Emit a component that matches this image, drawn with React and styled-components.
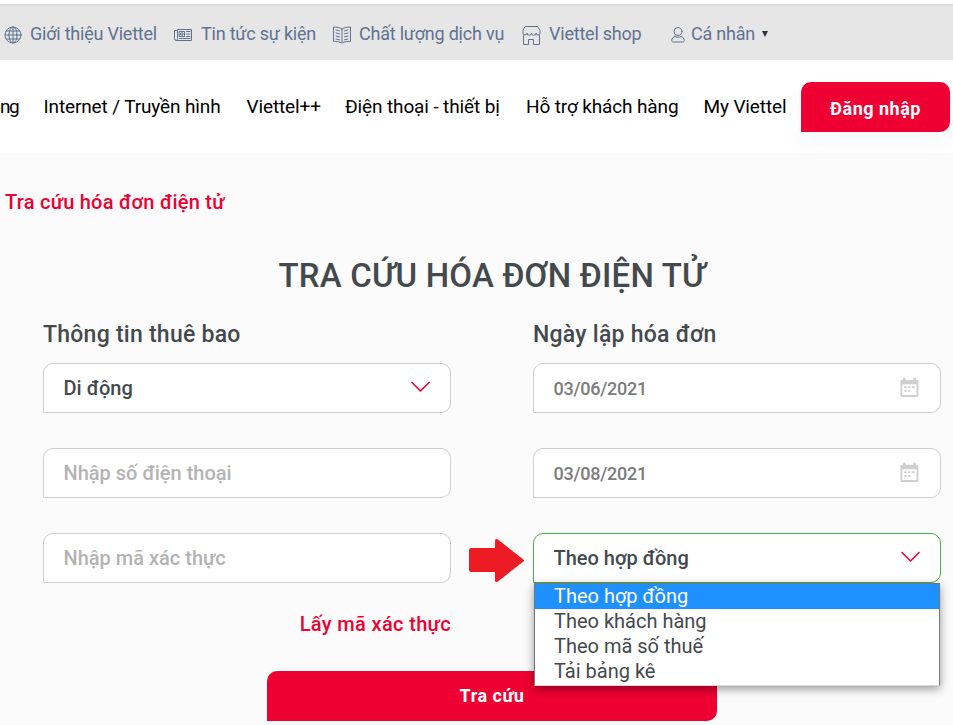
import React from "react";
import styled, { createGlobalStyle } from "styled-components";

const GlobalStyle = createGlobalStyle`
  * {
    box-sizing: border-box;
  }

  body {
    margin: 0;
    background-color: #fbfbfb;
    font-family: Roboto, "Liberation Sans", sans-serif;
    overflow: hidden;
  }
`;

const Page = styled.div`
  width: 953px;
  height: 725px;
  overflow: hidden;
  background-color: #fbfbfb;
`;

const TopBar = styled.div`
  height: 60px;
  padding: 4px 0 0 4px;
  display: grid;
  grid-template-columns: 170px 159px 189px 149px 1fr;
  align-items: center;
  background-color: #e6e6e6;
  border-top: 4px solid #ffffff;
  box-shadow: inset 0 1px 0 #d5d8dd;
`;

const TopLink = styled.a`
  display: flex;
  align-items: center;
  gap: ${(props) => props.$gap || 8}px;
  color: #5f7292;
  font-size: 18px;
  line-height: 24px;
  letter-spacing: -0.22px;
  white-space: nowrap;

  svg {
    flex: none;
    margin-top: 2px;
  }
`;

const Caret = styled.span`
  width: 0;
  height: 0;
  margin-left: 1px;
  border-left: 3px solid transparent;
  border-right: 3px solid transparent;
  border-top: 6px solid #2f3338;
`;

const Nav = styled.nav`
  height: 93px;
  display: grid;
  grid-template-columns: 43.5px 203px 98.5px 181px 177.500px 97.5px 149px;
  align-items: center;
  background-color: #ffffff;
`;

const NavLink = styled.a`
  color: #000000;
  font-size: 19px;
  line-height: 26px;
  letter-spacing: ${(props) => props.$spacing || -0.13}px;
  white-space: nowrap;
`;

const Button = styled.button`
  height: 50px;
  padding: 3px 0 0;
  border: 0;
  border-radius: 10px 10px 10px 0;
  background-color: #ee0033;
  color: #ffffff;
  font-family: Roboto, sans-serif;
  font-size: 18px;
  font-weight: 700;
  letter-spacing: 0.5px;
`;

const LoginButton = styled(Button)`
  box-shadow: 0 10px 20px rgba(68, 90, 120, 0.05);
`;

const SubmitButton = styled(Button)`
  display: block;
  width: 450px;
  margin: 33px auto 0;
  padding: 0 0 2px;
`;

const Breadcrumb = styled.div`
  padding: 35px 0 0 5px;
  color: #ee0033;
  font-size: 20px;
  font-weight: 500;
  line-height: 28px;
  letter-spacing: 0.25px;
`;

const Form = styled.form`
  width: 898px;
  margin-left: 43px;
`;

const Title = styled.h1`
  margin: 37px 0 0;
  color: #44494d;
  font-size: 33px;
  font-weight: 500;
  line-height: 46px;
  letter-spacing: 0.2px;
  text-align: center;
`;

const Columns = styled.div`
  display: grid;
  grid-template-columns: 408px 408px;
  column-gap: 82px;
  margin-top: 20px;
`;

const Column = styled.div`
  display: flex;
  flex-direction: column;
  gap: 35px;
`;

const Label = styled.h2`
  margin: 0 0 -22px;
  color: #44494d;
  font-size: 23px;
  font-weight: 500;
  line-height: 31px;
  letter-spacing: 0.25px;
`;

const Field = styled.div`
  position: relative;
  height: 50px;
  padding: 0 20px 0 19.5px;
  display: flex;
  align-items: center;
  justify-content: space-between;
  background-color: #ffffff;
  border: 1px solid ${(props) => (props.$active ? "#4caf50" : "#cfcfcf")};
  border-radius: 10px 10px 10px 0;
`;

const Value = styled.span`
  color: #44494d;
  font-size: 20px;
  font-weight: 500;
`;

const Input = styled.input`
  width: 100%;
  padding: 0;
  border: 0;
  outline: 0;
  background: none;
  color: #7b7b7b;
  font-family: inherit;
  font-size: ${(props) => props.$size || 20}px;
  font-weight: 500;
  letter-spacing: ${(props) => props.$spacing || 0}px;

  &::placeholder {
    color: #b3b3b3;
  }
`;

const Pointer = styled.svg`
  position: absolute;
  left: -65px;
  top: 5px;
`;

const Options = styled.ul`
  position: absolute;
  z-index: 2;
  top: 49px;
  left: 0;
  width: 406px;
  height: 103px;
  margin: 0;
  padding: 0;
  list-style: none;
  background-color: #ffffff;
  border: 1px solid #767676;
  border-bottom-color: #d9d9d9;
  box-shadow: 0 3px 9px rgba(0, 0, 0, 0.4);
`;

const Option = styled.li`
  height: 25px;
  padding-left: 19px;
  background-color: ${(props) => (props.$selected ? "#1e90ff" : "#ffffff")};
  color: ${(props) => (props.$selected ? "#ffffff" : "#44494d")};
  font-size: 20px;
  line-height: 25px;
`;

const CodeLink = styled.a`
  display: block;
  width: 408px;
  margin-top: 27px;
  color: #ee0033;
  font-size: 20px;
  font-weight: 500;
  line-height: 28px;
  letter-spacing: 0.35px;
  text-align: right;
`;

const lineProps = {
  fill: "none",
  stroke: "#5f7292",
  strokeWidth: 1,
  strokeLinejoin: "round",
  strokeLinecap: "round",
};

const GlobeIcon = () => (
  <svg width="18" height="18" viewBox="0 0 18 18" {...lineProps}>
    <circle cx="9" cy="9" r="8" />
    <ellipse cx="9" cy="9" rx="4" ry="8" />
    <path d="M9 1v16M1 9h16M2.5 5h13M2.5 13h13" />
  </svg>
);

const NewsIcon = () => (
  <svg width="19" height="18" viewBox="0 0 19 18" {...lineProps}>
    <path d="M3.5 3.5h14v11h-15a2 2 0 0 1-2-2v-8h3v8a1.5 1.5 0 0 1-1.5 2" />
    <rect x="5.5" y="5.5" width="5" height="5" />
    <rect x="7" y="7" width="2" height="2" />
    <path d="M12.5 5.500H16M12.5 8H16M12.5 10.500H16M5.500 12.500H16" />
  </svg>
);

const BookIcon = () => (
  <svg width="18" height="18" viewBox="0 0 18 18" {...lineProps}>
    <path d="M9 3C7 1.5 3.500 1 .5 1v14.500c3-.3 6 .2 8.500 1.500 2.500-1.300 5.500-1.800 8.500-1.500V1C14.500 1 11 1.500 9 3zM9 3v13" />
    <path d="M3 4l3.500.8M3 7l3.500.8M3 10l3.500.8M3 13l3.500.8M15 4l-3.500.8M15 7l-3.500.8M15 10l-3.500.8M15 13l-3.500.8" />
  </svg>
);

const ShopIcon = () => (
  <svg width="19" height="19" viewBox="0 0 19 19" {...lineProps}>
    <path d="M3.5.5h12l2.500 4V7a2 2 0 0 1-4 0 2.200 2.200 0 0 1-4.500 0A2.200 2.200 0 0 1 5 7a2 2 0 0 1-4 0V4.500z" />
    <path d="M1.500 9.500v9h5v-5h5v5h6v-9" />
  </svg>
);

const UserIcon = () => (
  <svg width="14" height="16" viewBox="0 0 14 16" {...lineProps}>
    <circle cx="7" cy="4.5" r="4" />
    <path d="M4 9.5C2 10 .7 11.500.7 13.500c0 1 .8 1.500 1.800 1.500h9c1 0 1.800-.5 1.800-1.500 0-2-1.300-3.500-3.300-4-2 1-4 1-6 0z" />
  </svg>
);

const ChevronIcon = () => (
  <svg width="19" height="14" viewBox="0 0 19 14">
    <path
      d="M1 1.5l8.5 8.500L18 1.500"
      fill="none"
      stroke="#ee0033"
      strokeWidth="1.6"
      strokeLinecap="round"
      strokeLinejoin="round"
    />
  </svg>
);

const CalendarIcon = () => (
  <svg width="21" height="23" viewBox="0 0 21 23" fill="#cfcfcf">
    <path
      fillRule="evenodd"
      d="M3 2.5V1.500a1.500 1.500 0 0 1 3 0v1h8v-1a1.500 1.500 0 0 1 3 0v1h1a1.500 1.500 0 0 1 1.500 1.500v15a1.500 1.500 0 0 1-1.500 1.500H2A1.500 1.500 0 0 1 .5 19V4A1.500 1.500 0 0 1 2 2.500zM2.500 7v11.500h15V7z"
    />
    <path d="M4.5 9H7v2H4.500zM8.500 9H11v2H8.500zM12.500 9h3v2h-3zM4.500 13H7v2H4.500zM8.500 13H11v2H8.500z" />
  </svg>
);

const App = () => {
  return (
    <Page>
      <GlobalStyle />
      <TopBar>
        <TopLink>
          <GlobeIcon />
          Giới thiệu Viettel
        </TopLink>
        <TopLink>
          <NewsIcon />
          Tin tức sự kiện
        </TopLink>
        <TopLink>
          <BookIcon />
          Chất lượng dịch vụ
        </TopLink>
        <TopLink>
          <ShopIcon />
          Viettel shop
        </TopLink>
        <TopLink $gap={6}>
          <UserIcon />
          Cá nhân
          <Caret />
        </TopLink>
      </TopBar>

      <Nav>
        <NavLink $spacing={-1.5}>ng</NavLink>
        <NavLink>Internet / Truyền hình</NavLink>
        <NavLink>Viettel++</NavLink>
        <NavLink>Điện thoại - thiết bị</NavLink>
        <NavLink>Hỗ trợ khách hàng</NavLink>
        <NavLink>My Viettel</NavLink>
        <LoginButton>Đăng nhập</LoginButton>
      </Nav>

      <Breadcrumb>Tra cứu hóa đơn điện tử</Breadcrumb>

      <Form>
        <Title>TRA CỨU HÓA ĐƠN ĐIỆN TỬ</Title>
        <Columns>
          <Column>
            <Label>Thông tin thuê bao</Label>
            <Field>
              <Value>Di động</Value>
              <ChevronIcon />
            </Field>
            <Field>
              <Input placeholder="Nhập số điện thoại" />
            </Field>
            <Field>
              <Input placeholder="Nhập mã xác thực" />
            </Field>
          </Column>

          <Column>
            <Label>Ngày lập hóa đơn</Label>
            <Field>
              <Input $size={18} $spacing={-0.25} defaultValue="03/06/2021" />
              <CalendarIcon />
            </Field>
            <Field>
              <Input $size={18} $spacing={-0.25} defaultValue="03/08/2021" />
              <CalendarIcon />
            </Field>
            <Field $active>
              <Pointer width="56" height="44" viewBox="0 0 56 44">
                <path
                  d="M2 9h24V2q0-3 3-1.500L55 21v1L29 42.500q-3 1.500-3-1V33H2q-2 0-2-2V11q0-2 2-2z"
                  fill="#ed1c24"
                />
              </Pointer>
              <Value>Theo hợp đồng</Value>
              <ChevronIcon />
              <Options>
                <Option $selected>Theo hợp đồng</Option>
                <Option>Theo khách hàng</Option>
                <Option>Theo mã số thuế</Option>
                <Option>Tải bảng kê</Option>
              </Options>
            </Field>
          </Column>
        </Columns>
        <CodeLink>Lấy mã xác thực</CodeLink>
        <SubmitButton type="button">Tra cứu</SubmitButton>
      </Form>
    </Page>
  );
};

export default App;
